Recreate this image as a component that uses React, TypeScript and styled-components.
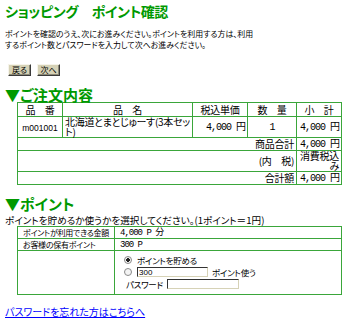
import React from "react";
import styled, { createGlobalStyle } from "styled-components";

const GlobalStyle = createGlobalStyle`
  html, body {
    margin: 0;
    padding: 0;
    background: #ffffff;
  }
  body {
    font-family: "Noto Sans CJK JP", "Noto Sans", sans-serif;
    font-feature-settings: "palt" 1;
    color: #000000;
  }
`;

const Page = styled.div`
  width: 350px;
  height: 323px;
  box-sizing: border-box;
  padding: 2px 5px 0;
  overflow: hidden;
`;

const Title = styled.h1`
  margin: 0;
  font-size: 14px;
  line-height: 18px;
  letter-spacing: -0.4px;
  font-weight: bold;
  color: #009900;
`;

const Lead = styled.p`
  margin: 9px 0 0;
  font-size: 9.5px;
  line-height: 13px;
  white-space: nowrap;
  transform: scale(0.835);
  transform-origin: 0 0;
`;

const Buttons = styled.div`
  display: flex;
  gap: 6px;
  margin: 9px 0 0 3px;
`;

const Btn = styled.button`
  height: 12px;
  width: 23px;
  padding: 0;
  font-family: inherit;
  font-feature-settings: "palt" 1;
  font-size: 8px;
  line-height: 10px;
  background: #d6d2b6;
  border: 1px solid;
  border-color: #f6f4ea #3a3a3a #3a3a3a #f6f4ea;
  box-shadow: inset -1px -1px 0 #8c8a78;
  color: #000;
`;

const SectionTitle = styled.h2<{ $top: number }>`
  margin: ${(p) => p.$top}px 0 0;
  font-size: 15px;
  line-height: 15px;
  font-weight: bold;
  color: #009900;
`;

const Note = styled.p`
  margin: 3px 0 0;
  font-size: 9.6px;
  line-height: 12px;
  white-space: nowrap;
`;

const Table = styled.table`
  margin-left: 12px;
  width: 324px;
  table-layout: fixed;
  border-collapse: collapse;
  border-top: 1px solid #3aa63a;
  border-right: 1px solid #3aa63a;
  border-left: 1px solid #0a5e0a;
  border-bottom: 1px solid #0a5e0a;
`;

const Row = styled.tr<{ $h: number }>`
  height: ${(p) => p.$h}px;
`;

const Cell = styled.td<{ $align?: string; $valign?: string; $size?: number; $pad?: number }>`
  border: 1px solid #3aa63a;
  padding: 0 2px 0 ${(p) => p.$pad ?? 2}px;
  font-size: ${(p) => p.$size ?? 10}px;
  line-height: 10px;
  letter-spacing: -0.28px;
  text-align: ${(p) => p.$align ?? "left"};
  vertical-align: ${(p) => p.$valign ?? "middle"};
`;

const Num = styled.span`
  font-family: "Liberation Mono", "Noto Sans CJK JP", monospace;
  letter-spacing: -1px;
`;

const Code = styled.span`
  font-family: "Liberation Sans", sans-serif;
  font-size: 8.5px;
  letter-spacing: 0;
`;

const Choices = styled.div`
  display: flex;
  flex-direction: column;
  gap: 2px;
  padding: 4px 0 0 7px;
  font-size: 8.5px;
  line-height: 10px;
`;

const Choice = styled.label<{ $indent?: number }>`
  display: flex;
  align-items: center;
  gap: 4px;
  margin-left: ${(p) => p.$indent ?? 0}px;
`;

const Radio = styled.input.attrs({ type: "radio" })`
  appearance: none;
  margin: 0 1px 0 0;
  width: 8px;
  height: 8px;
  border-radius: 50%;
  border: 1px solid #8a8a8a;
  background: #f4f4f4;
  box-sizing: border-box;
  &:checked {
    background: radial-gradient(circle, #222 0 1.6px, #f4f4f4 2px);
  }
`;

const Field = styled.input<{ $w: number }>`
  width: ${(p) => p.$w}px;
  height: 10px;
  box-sizing: border-box;
  padding: 0 1px;
  font-family: "Liberation Sans", sans-serif;
  font-size: 8px;
  line-height: 8px;
  border: 1px solid;
  border-color: #333 #d6d2b6 #d6d2b6 #333;
  background: #fff;
  outline: none;
`;

const Forgot = styled.a`
  display: inline-block;
  margin-top: 10px;
  font-size: 10px;
  line-height: 13px;
  color: #0000ff;
  text-decoration: underline;
`;

export default function App() {
  return (
    <>
      <GlobalStyle />
      <Page>
        <Title>ショッピング　ポイント確認</Title>
        <Lead>
          ポイントを確認のうえ、次にお進みください。ポイントを利用する方は、利用
          <br />
          するポイント数とパスワードを入力して次へお進みください。
        </Lead>
        <Buttons>
          <Btn>戻る</Btn>
          <Btn>次へ</Btn>
        </Buttons>

        <SectionTitle $top={11}>▼ご注文内容</SectionTitle>
        <Table>
          <colgroup>
            <col style={{ width: 45 }} />
            <col style={{ width: 130 }} />
            <col style={{ width: 55 }} />
            <col style={{ width: 49 }} />
            <col style={{ width: 45 }} />
          </colgroup>
          <tbody>
            <Row $h={14}>
              <Cell $align="center">品　番</Cell>
              <Cell $align="center">品　名</Cell>
              <Cell $align="center">税込単価</Cell>
              <Cell $align="center">数　量</Cell>
              <Cell $align="center">小　計</Cell>
            </Row>
            <Row $h={21}>
              <Cell $align="center">
                <Code>m001001</Code>
              </Cell>
              <Cell>北海道とまとじゅーす(3本セット)</Cell>
              <Cell $align="right">
                <Num>4,000 円</Num>
              </Cell>
              <Cell $align="center">
                <Num>1</Num>
              </Cell>
              <Cell $align="right">
                <Num>4,000 円</Num>
              </Cell>
            </Row>
            <Row $h={12}>
              <Cell colSpan={4} $align="right">
                商品合計
              </Cell>
              <Cell $align="right">
                <Num>4,000 円</Num>
              </Cell>
            </Row>
            <Row $h={21}>
              <Cell colSpan={4} $align="right">
                (内　税)
              </Cell>
              <Cell $align="right">消費税込み</Cell>
            </Row>
            <Row $h={11}>
              <Cell colSpan={4} $align="right">
                合計額
              </Cell>
              <Cell $align="right">
                <Num>4,000 円</Num>
              </Cell>
            </Row>
          </tbody>
        </Table>

        <SectionTitle $top={11}>▼ポイント</SectionTitle>
        <Note>ポイントを貯めるか使うかを選択してください。(1ポイント＝1円)</Note>
        <Table>
          <colgroup>
            <col style={{ width: 97 }} />
            <col style={{ width: 227 }} />
          </colgroup>
          <tbody>
            <Row $h={12}>
              <Cell $size={8} $pad={5}>
                ポイントが利用できる金額
              </Cell>
              <Cell $size={9} $pad={5}>
                <Num>4,000 P 分</Num>
              </Cell>
            </Row>
            <Row $h={12}>
              <Cell $size={8} $pad={5}>
                お客様の保有ポイント
              </Cell>
              <Cell $size={9} $pad={5}>
                <Num>300 P</Num>
              </Cell>
            </Row>
            <Row $h={44}>
              <Cell />
              <Cell $valign="top">
                <Choices>
                  <Choice>
                    <Radio name="pt" defaultChecked />
                    ポイントを貯める
                  </Choice>
                  <Choice>
                    <Radio name="pt" />
                    <Field $w={71} defaultValue="300" />
                    ポイント使う
                  </Choice>
                  <Choice $indent={2}>
                    パスワード
                    <Field $w={72} type="password" />
                  </Choice>
                </Choices>
              </Cell>
            </Row>
          </tbody>
        </Table>

        <Forgot href="#">パスワードを忘れた方はこちらへ</Forgot>
      </Page>
    </>
  );
}
